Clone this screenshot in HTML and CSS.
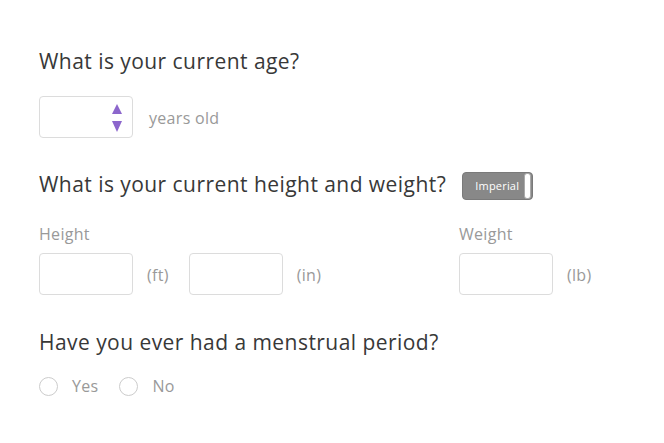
FILE: index.html
```html
<!DOCTYPE html>
<html lang="en">
<head>
    <meta charset="UTF-8">
    <meta name="viewport" content="width=device-width, initial-scale=1.0">
    <title>Health Questions</title>
    <link rel="stylesheet" href="styles.css">
</head>
<body>
    <form class="survey">
        <section class="question">
            <h2 class="question-title">What is your current age?</h2>
            <div class="field-row">
                <div class="number-box">
                    <input type="text" class="text-input">
                    <span class="spinner">
                        <span class="arrow-up"></span>
                        <span class="arrow-down"></span>
                    </span>
                </div>
                <span class="unit unit-wide">years old</span>
            </div>
        </section>

        <section class="question">
            <h2 class="question-title">What is your current height and weight?
                <span class="toggle">Imperial<span class="knob"></span></span>
            </h2>
            <div class="measure-row">
                <div class="measure">
                    <label class="field-label">Height</label>
                    <div class="field-row">
                        <input type="text" class="text-input">
                        <span class="unit">(ft)</span>
                        <input type="text" class="text-input">
                        <span class="unit">(in)</span>
                    </div>
                </div>
                <div class="measure">
                    <label class="field-label">Weight</label>
                    <div class="field-row">
                        <input type="text" class="text-input">
                        <span class="unit">(lb)</span>
                    </div>
                </div>
            </div>
        </section>

        <section class="question">
            <h2 class="question-title">Have you ever had a menstrual period?</h2>
            <div class="radio-row">
                <label class="radio"><span class="radio-dot"></span>Yes</label>
                <label class="radio"><span class="radio-dot"></span>No</label>
            </div>
        </section>
    </form>
</body>
</html>
```

FILE: styles.css
```css
body {
    font-family: 'Open Sans', sans-serif;
    margin: 0;
    padding: 46px 39px 10px;
    color: #383838;
    background: #fff;
}
.survey {
    width: 600px;
}
.question {
    margin-bottom: 31px;
}
.question:last-child {
    margin-bottom: 0;
}
.question-title {
    font-size: 21px;
    font-weight: 400;
    letter-spacing: 0.45px;
    margin: 0 0 20px;
    line-height: 30px;
    display: flex;
    align-items: center;
}
.field-row {
    display: flex;
    align-items: center;
}
.text-input {
    width: 94px;
    height: 42px;
    box-sizing: border-box;
    border: 1px solid #dcdcdc;
    border-radius: 4px;
    font: inherit;
    padding: 0 10px;
    outline: none;
}
.number-box {
    position: relative;
}
.spinner {
    position: absolute;
    right: 11px;
    top: 8px;
    display: flex;
    flex-direction: column;
    gap: 7px;
}
.arrow-up,
.arrow-down {
    width: 0;
    height: 0;
    border-left: 5.5px solid transparent;
    border-right: 5.5px solid transparent;
}
.arrow-up {
    border-bottom: 10px solid #8c66cc;
}
.arrow-down {
    border-top: 11px solid #8c66cc;
}
.unit {
    color: #999;
    font-size: 16px;
    letter-spacing: 0.3px;
    margin: 0 20px 0 14px;
    padding-top: 2px;
}
.unit-wide {
    margin-left: 16px;
}
.toggle {
    display: inline-flex;
    align-items: center;
    justify-content: space-between;
    margin: 2px 0 -2px 16px;
    height: 28px;
    width: 71px;
    box-sizing: border-box;
    padding: 0 1px 0 12px;
    background: #888;
    border: 1px solid #7a7a7a;
    border-radius: 4px;
    color: #fff;
    font-size: 11px;
    letter-spacing: 0.2px;
}
.knob {
    width: 7px;
    height: 26px;
    background: #fff;
    border: 1px solid #aaa;
    box-sizing: border-box;
    border-radius: 3px;
}
.measure-row {
    display: flex;
    padding: 5px 0 1px;
}
.measure {
    flex: none;
}
.measure:first-child {
    width: 420px;
}
.field-label {
    display: block;
    color: #999;
    font-size: 16px;
    letter-spacing: 0.3px;
    margin: 0 0 9px;
    line-height: 20px;
}
.radio-row {
    display: flex;
    gap: 21px;
    margin-top: -2px;
}
.radio {
    display: flex;
    align-items: center;
    color: #999;
    font-size: 16px;
    letter-spacing: 0.3px;
}
.radio-dot {
    width: 19px;
    height: 19px;
    box-sizing: border-box;
    border: 1px solid #ccc;
    border-radius: 50%;
    margin-right: 14px;
}
```
